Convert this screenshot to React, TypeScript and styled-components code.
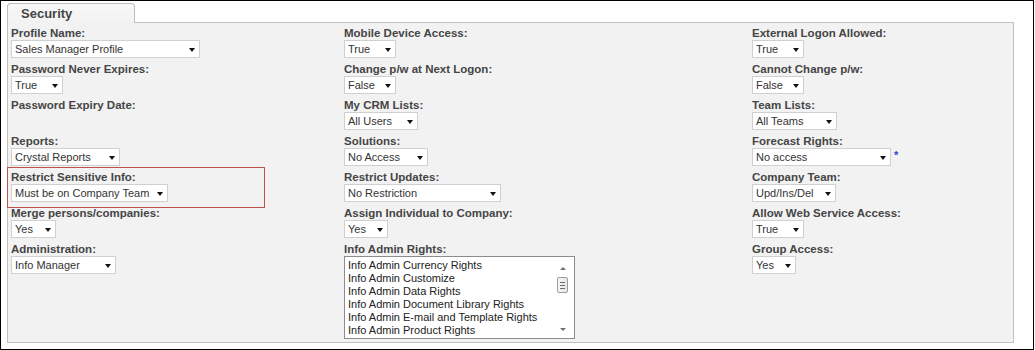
import React from 'react';
import styled, { createGlobalStyle, css } from 'styled-components';

const GlobalStyle = createGlobalStyle`
  html, body { margin: 0; padding: 0; background: #fff; }
  body { font-family: "Liberation Sans", Arial, sans-serif; }
`;

const Frame = styled.div`
  width: 1034px;
  height: 350px;
  box-sizing: border-box;
  border: 1px solid #000;
  background: #fff;
  padding: 2px 0 0 6px;
`;

const TabStrip = styled.div`
  display: flex;
  height: 19px;
`;

const Tab = styled.div`
  position: relative;
  z-index: 1;
  width: 128px;
  height: 20px;
  margin-bottom: -1px;
  box-sizing: border-box;
  border: 1px solid #bdbdbd;
  border-bottom: none;
  border-radius: 4px 4px 0 0;
  background: linear-gradient(#f8f8f8, #f2f2f2);
  padding-left: 13px;
  font: bold 13px/19px "Liberation Sans", Arial, sans-serif;
  color: #444;
`;

const Panel = styled.div`
  width: 1007px;
  height: 321px;
  box-sizing: border-box;
  border: 1px solid #c2c2c2;
  background: #f2f2f2;
  padding: 4px 0 0 3px;
  display: grid;
  grid-template-columns: 333px 408px 1fr;
  grid-template-rows: repeat(6, 36px) auto;
`;

const Field = styled.div<{ $highlight?: boolean }>`
  position: relative;
  display: flex;
  flex-direction: column;
  align-items: flex-start;
  ${(p) =>
    p.$highlight &&
    css`
      &::before {
        content: '';
        position: absolute;
        left: -4px;
        top: -4px;
        width: 258px;
        height: 41px;
        box-sizing: border-box;
        border: 1px solid #c0504d;
        pointer-events: none;
      }
    `}
`;

const Label = styled.div`
  font: bold 11.5px/13px "Liberation Sans", Arial, sans-serif;
  color: #454545;
  white-space: nowrap;
`;

const ControlRow = styled.div`
  display: flex;
  align-items: center;
  gap: 3px;
`;

const Select = styled.div<{ $w: number }>`
  width: ${(p) => p.$w}px;
  height: 18px;
  box-sizing: border-box;
  border: 1px solid #d0d0d0;
  background: #fff;
  display: flex;
  align-items: center;
  justify-content: space-between;
  padding: 0 4px 0 3px;
  font: 11px/16px "Liberation Sans", Arial, sans-serif;
  color: #333;
  white-space: nowrap;
`;

const Arrow = styled.span`
  width: 0;
  height: 0;
  border-left: 3.5px solid transparent;
  border-right: 3.5px solid transparent;
  border-top: 4px solid #111;
  margin-top: 2px;
`;

const Asterisk = styled.span`
  font: bold 11px/11px "Liberation Sans", Arial, sans-serif;
  color: #3a3ad0;
  margin-top: -4px;
`;

const ListBox = styled.div`
  width: 231px;
  height: 83px;
  box-sizing: border-box;
  border: 1px solid #8c8c8c;
  background: #fff;
  display: flex;
`;

const ListItems = styled.div`
  flex: 1;
  overflow: hidden;
  padding: 2px 0 0 3px;
  font: 11px/13px "Liberation Sans", Arial, sans-serif;
  color: #222;
  white-space: nowrap;
`;

const ScrollBar = styled.div`
  width: 18px;
  display: flex;
  flex-direction: column;
  align-items: flex-start;
  padding-left: 1px;
  box-sizing: border-box;
`;

const ScrollArrow = styled.div<{ $dir: 'up' | 'down' }>`
  width: 11px;
  display: flex;
  justify-content: center;
  margin-top: ${(p) => (p.$dir === 'up' ? '10px' : 'auto')};
  margin-bottom: ${(p) => (p.$dir === 'down' ? '7px' : '0')};
  &::after {
    content: '';
    width: 0;
    height: 0;
    border-left: 3px solid transparent;
    border-right: 3px solid transparent;
    ${(p) =>
      p.$dir === 'up'
        ? css`border-bottom: 3px solid #707070;`
        : css`border-top: 3px solid #707070;`}
  }
`;

const Thumb = styled.div`
  width: 11px;
  height: 16px;
  margin-top: 7px;
  box-sizing: border-box;
  border: 1px solid #9d9d9d;
  border-radius: 2px;
  background: linear-gradient(90deg, #f6f6f6, #e6e6e6);
  display: flex;
  flex-direction: column;
  align-items: center;
  justify-content: center;
  gap: 2px;
`;

const Grip = styled.div`
  width: 5px;
  height: 1px;
  background: #6a6a6a;
`;

type Item = {
  label: string;
  value?: string;
  w?: number;
  star?: boolean;
  highlight?: boolean;
  list?: string[];
};

const rows: Item[][] = [
  [
    { label: 'Profile Name:', value: 'Sales Manager Profile', w: 189 },
    { label: 'Mobile Device Access:', value: 'True', w: 52 },
    { label: 'External Logon Allowed:', value: 'True', w: 52 },
  ],
  [
    { label: 'Password Never Expires:', value: 'True', w: 52 },
    { label: 'Change p/w at Next Logon:', value: 'False', w: 52 },
    { label: 'Cannot Change p/w:', value: 'False', w: 52 },
  ],
  [
    { label: 'Password Expiry Date:' },
    { label: 'My CRM Lists:', value: 'All Users', w: 74 },
    { label: 'Team Lists:', value: 'All Teams', w: 85 },
  ],
  [
    { label: 'Reports:', value: 'Crystal Reports', w: 109 },
    { label: 'Solutions:', value: 'No Access', w: 84 },
    { label: 'Forecast Rights:', value: 'No access', w: 139, star: true },
  ],
  [
    { label: 'Restrict Sensitive Info:', value: 'Must be on Company Team', w: 157, highlight: true },
    { label: 'Restrict Updates:', value: 'No Restriction', w: 157 },
    { label: 'Company Team:', value: 'Upd/Ins/Del', w: 84 },
  ],
  [
    { label: 'Merge persons/companies:', value: 'Yes', w: 45 },
    { label: 'Assign Individual to Company:', value: 'Yes', w: 44 },
    { label: 'Allow Web Service Access:', value: 'True', w: 52 },
  ],
  [
    { label: 'Administration:', value: 'Info Manager', w: 105 },
    {
      label: 'Info Admin Rights:',
      list: [
        'Info Admin Currency Rights',
        'Info Admin Customize',
        'Info Admin Data Rights',
        'Info Admin Document Library Rights',
        'Info Admin E-mail and Template Rights',
        'Info Admin Product Rights',
      ],
    },
    { label: 'Group Access:', value: 'Yes', w: 44 },
  ],
];

function FieldView({ item }: { item: Item }) {
  return (
    <Field $highlight={item.highlight}>
      <Label>{item.label}</Label>
      {item.value && item.w && (
        <ControlRow>
          <Select $w={item.w}>
            <span>{item.value}</span>
            <Arrow />
          </Select>
          {item.star && <Asterisk>*</Asterisk>}
        </ControlRow>
      )}
      {item.list && (
        <ListBox>
          <ListItems>
            {item.list.map((t) => (
              <div key={t}>{t}</div>
            ))}
          </ListItems>
          <ScrollBar>
            <ScrollArrow $dir="up" />
            <Thumb>
              <Grip />
              <Grip />
              <Grip />
            </Thumb>
            <ScrollArrow $dir="down" />
          </ScrollBar>
        </ListBox>
      )}
    </Field>
  );
}

export default function App() {
  return (
    <>
      <GlobalStyle />
      <Frame>
        <TabStrip>
          <Tab>Security</Tab>
        </TabStrip>
        <Panel>
          {rows.flat().map((item) => (
            <FieldView key={item.label} item={item} />
          ))}
        </Panel>
      </Frame>
    </>
  );
}
